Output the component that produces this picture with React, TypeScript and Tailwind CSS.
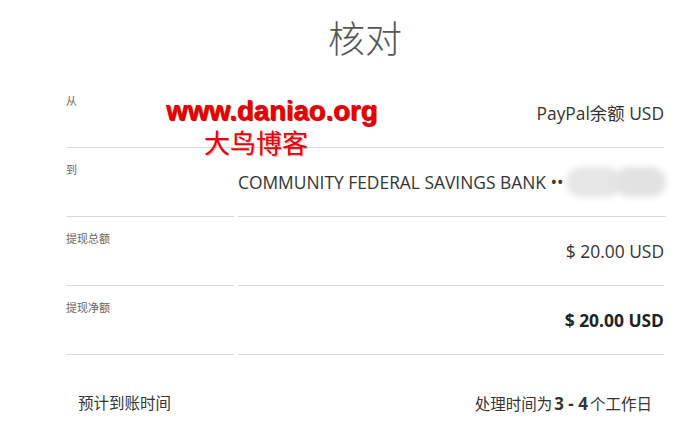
import React from "react";

const sans = { fontFamily: '"Open Sans", "Noto Sans CJK SC", sans-serif' };

function Row({ label, children, bold }: { label: string; children: React.ReactNode; bold?: boolean }) {
  return (
    <div className="grid grid-cols-[168px_1fr] gap-x-[4px] h-[69px]">
      <div className="border-b border-[#d9d9d9] pt-[14px] text-[11px] leading-[16px] text-[#666]">{label}</div>
      <div
        className={`border-b border-[#d9d9d9] pt-[23px] flex justify-end items-start text-[17.4px] leading-[22px] whitespace-nowrap ${
          bold ? "font-bold text-[#222]" : "text-[#333]"
        }`}
      >
        {children}
      </div>
    </div>
  );
}

export default function App() {
  return (
    <div className="relative w-[690px] h-[428px] bg-white overflow-hidden" style={sans}>
      <div className="ml-[66px] w-[598px]">
        <div className="pt-[17px] pb-[18px] text-center text-[37px] leading-[44px] font-light text-[#555]">核对</div>
        <Row label="从">PayPal余额 USD</Row>
        <Row label="到">
          <span className="flex items-center">
            COMMUNITY FEDERAL SAVINGS BANK ••
            <span className="relative ml-[2px] w-[100px] h-[22px] inline-block">
              <span className="absolute left-[0px] top-[-4px] w-[56px] h-[30px] rounded-full bg-[#e6e6e6] blur-[3px]" />
              <span className="absolute left-[48px] top-[-4px] w-[52px] h-[30px] rounded-full bg-[#e2e2e2] blur-[3px]" />
            </span>
          </span>
        </Row>
        <Row label="提现总额">$ 20.00 USD</Row>
        <Row label="提现净额" bold>
          $ 20.00 USD
        </Row>
        <div className="flex justify-between px-3 pt-[38px] text-[15.5px] leading-[21px] text-[#333]">
          <span>预计到账时间</span>
          <span>
            处理时间为<span className="font-bold text-[17px] mx-[2px] whitespace-pre">3 - 4</span>个工作日
          </span>
        </div>
      </div>

      <div
        className="absolute left-[166px] top-[96px] text-[27.5px] leading-[30px] font-bold text-[#e8000b]"
        style={{ fontFamily: '"Liberation Sans", Arial, sans-serif', textShadow: "1px 1px 1px #9b0000" }}
      >
        www.daniao.org
      </div>
      <div
        className="absolute left-[204px] top-[127px] text-[26px] leading-[30px] text-[#e8000b]"
        style={{ fontFamily: '"Noto Sans CJK SC", serif', textShadow: "1px 1px 1px #c9a0a0" }}
      >
        大鸟博客
      </div>
    </div>
  );
}
